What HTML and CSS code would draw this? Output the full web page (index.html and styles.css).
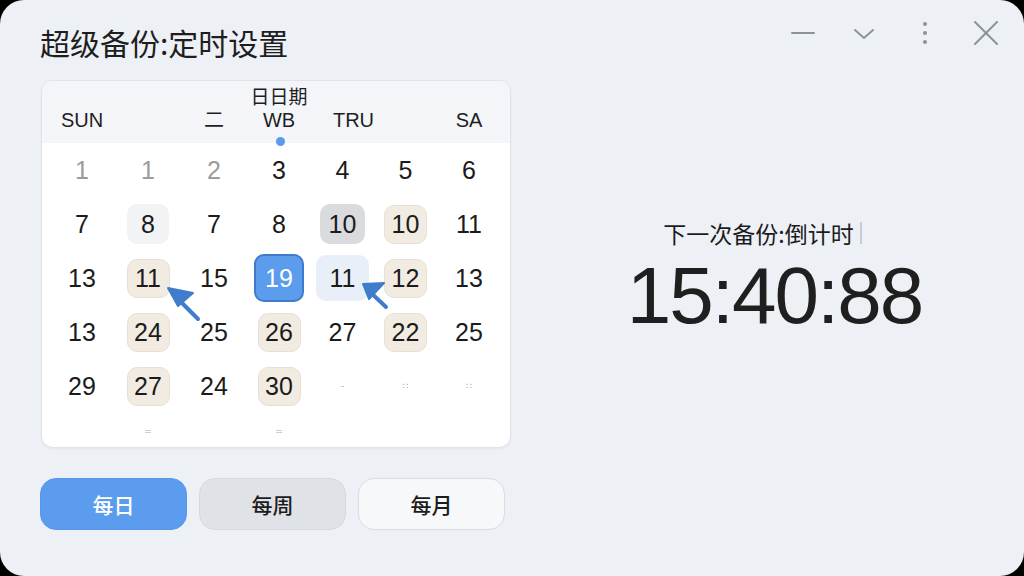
FILE: index.html
```html
<!DOCTYPE html>
<html lang="zh-CN">
<head>
<meta charset="utf-8">
<title>超级备份:定时设置</title>
<link rel="stylesheet" href="styles.css">
</head>
<body>
<div class="window">
  <section class="left">
    <h1 class="title">超级备份:定时设置</h1>
    <div class="card">
      <div class="card-head">
        <div class="hl">SUN</div>
        <div class="hl"></div>
        <div class="hl">二</div>
        <div class="hl stack"><span class="cjk">日日期</span><span>WB</span></div>
        <div class="hl shift">TRU</div>
        <div class="hl"></div>
        <div class="hl">SA</div>
      </div>
      <span class="today-dot"></span>
      <div class="days">
        <div class="d muted">1</div><div class="d muted">1</div><div class="d muted">2</div><div class="d">3</div><div class="d">4</div><div class="d">5</div><div class="d">6</div>

        <div class="d">7</div><div class="d"><span class="chip light">8</span></div><div class="d">7</div><div class="d">8</div><div class="d"><span class="chip gray">10</span></div><div class="d"><span class="chip beige">10</span></div><div class="d">11</div>

        <div class="d">13</div><div class="d"><span class="chip beige">11</span></div><div class="d">15</div><div class="d"><span class="chip blue">19</span></div><div class="d"><span class="chip pale">11</span></div><div class="d"><span class="chip beige">12</span></div><div class="d">13</div>

        <div class="d">13</div><div class="d"><span class="chip beige">24</span></div><div class="d">25</div><div class="d"><span class="chip beige">26</span></div><div class="d">27</div><div class="d"><span class="chip beige">22</span></div><div class="d">25</div>

        <div class="d">29</div><div class="d"><span class="chip beige">27</span></div><div class="d">24</div><div class="d"><span class="chip beige">30</span></div><div class="d tiny">-</div><div class="d tiny">∷</div><div class="d tiny">∷</div>

        <div class="d"></div><div class="d tiny">=</div><div class="d"></div><div class="d tiny">=</div><div class="d"></div><div class="d"></div><div class="d"></div>
      </div>
      <svg class="arrows" width="470" height="368" viewBox="0 0 470 368">
        <g fill="#3f7ccc" stroke="#3f7ccc" stroke-linecap="round" stroke-linejoin="round">
          <line x1="132" y1="214" x2="156" y2="238" stroke-width="4"/>
          <polygon points="126,207 151,212 136,225" stroke-width="2"/>
          <line x1="327" y1="210" x2="344" y2="226" stroke-width="4"/>
          <polygon points="321,203 342,202 327,218" stroke-width="2"/>
        </g>
      </svg>
    </div>
    <div class="tabs">
      <button class="tab on">每日</button>
      <button class="tab mid">每周</button>
      <button class="tab off">每月</button>
    </div>
  </section>
  <section class="right">
    <div class="controls">
      <svg class="ic" width="24" height="24" viewBox="0 0 24 24"><line x1="1" y1="12" x2="23" y2="12"/></svg>
      <svg class="ic" width="24" height="24" viewBox="0 0 24 24"><polyline points="3,9 12,17 21,9"/></svg>
      <svg class="ic dots" width="24" height="24" viewBox="0 0 24 24"><circle cx="12" cy="3" r="2"/><circle cx="12" cy="12" r="2"/><circle cx="12" cy="21" r="2"/></svg>
      <svg class="ic" width="24" height="24" viewBox="0 0 24 24"><line x1="1" y1="1" x2="23" y2="23"/><line x1="23" y1="1" x2="1" y2="23"/></svg>
    </div>
    <div class="countdown">
      <div class="cd-label">下一次备份:倒计时<span class="caret"></span></div>
      <div class="cd-time">15:40:88</div>
    </div>
  </section>
</div>
</body>
</html>
```

FILE: styles.css
```css
* { box-sizing: border-box; margin: 0; padding: 0; }

html, body {
  width: 1024px;
  height: 576px;
  overflow: hidden;
  background: #000;
}

body {
  font-family: "Liberation Sans", "Noto Sans CJK SC", sans-serif;
  color: #1d1d1f;
}

.window {
  width: 1024px;
  height: 576px;
  background: #edf1f6;
  border-radius: 24px;
  display: flex;
}

.left {
  width: 511px;
  padding: 24px 0 0 40px;
  display: flex;
  flex-direction: column;
}

.title {
  font-family: "Noto Sans CJK SC", sans-serif;
  font-size: 30px;
  line-height: 36px;
  font-weight: 400;
  color: #1e1e1e;
}

.card {
  position: relative;
  margin: 20px 0 0 1px;
  width: 470px;
  height: 368px;
  background: #fff;
  border: 1px solid #e0e4e9;
  border-radius: 12px;
  overflow: hidden;
  box-shadow: 0 1px 3px rgba(30, 40, 60, 0.05);
}

.card-head,
.days {
  display: grid;
  grid-template-columns: 66px 66px 66px 64px 63px 63px 64px;
  padding: 0 0 0 7px;
}

.card-head {
  height: 62px;
  background: #f3f5f8;
  align-items: end;
  padding-bottom: 11px;
}

.hl {
  font-size: 20px;
  line-height: 24px;
  text-align: center;
  color: #1e1e1e;
  display: flex;
  flex-direction: column;
  align-items: center;
}

.hl .cjk {
  font-family: "Noto Sans CJK SC", sans-serif;
  font-size: 19px;
}

.hl.shift { transform: translateX(11px); }

.today-dot {
  position: absolute;
  left: 234px;
  top: 56px;
  width: 9px;
  height: 9px;
  border-radius: 50%;
  background: #5b9bec;
}

.days {
  grid-template-rows: repeat(5, 54px) 35px;
}

.d {
  display: flex;
  align-items: center;
  justify-content: center;
  font-size: 25px;
  color: #1b1b1b;
}

.d.muted { color: #9c9c9c; }

.d.tiny {
  font-family: "DejaVu Sans", sans-serif;
  font-size: 9px;
  color: #a5a8ad;
}

.chip {
  width: 42px;
  height: 40px;
  border-radius: 10px;
  display: flex;
  align-items: center;
  justify-content: center;
}

.chip.light { background: #f2f3f5; }
.chip.gray { width: 45px; background: #d9dbde; }
.chip.beige {
  width: 43px;
  height: 39px;
  background: #f1ebe1;
  border: 1px solid #e9e0d3;
}
.chip.blue {
  width: 50px;
  height: 48px;
  background: #5c9cec;
  border: 2px solid #3d7bcd;
  color: #fff;
}
.chip.pale {
  width: 53px;
  height: 46px;
  background: #e8eff8;
}

.arrows {
  position: absolute;
  left: 0;
  top: 0;
  pointer-events: none;
}

.tabs {
  margin-top: 30px;
  display: flex;
  gap: 12px;
}

.tab {
  width: 147px;
  height: 52px;
  border-radius: 16px;
  border: 1px solid transparent;
  font-family: "Noto Sans CJK SC", sans-serif;
  font-size: 21px;
  font-weight: 500;
  color: #1c1c1c;
  display: flex;
  align-items: center;
  justify-content: center;
}

.tab.on { background: #5c9cee; color: #fff; border-color: #5896ea; }
.tab.mid { background: #dfe2e6; border-color: #d5d8dd; }
.tab.off { background: #f6f8fa; border-color: #d8dce1; }

.right {
  flex: 1;
  display: flex;
  flex-direction: column;
}

.controls {
  display: flex;
  justify-content: flex-end;
  gap: 37px;
  padding: 21px 26px 0 0;
}

.ic {
  stroke: #8d9298;
  stroke-width: 2;
  fill: none;
  stroke-linecap: round;
}

.ic.dots { fill: #8d9298; stroke: none; }

.countdown {
  flex: 1;
  display: flex;
  flex-direction: column;
  align-items: center;
  justify-content: center;
  padding-bottom: 66px;
  gap: 9px;
}

.cd-label {
  font-family: "Noto Sans CJK SC", sans-serif;
  font-size: 23px;
  line-height: 28px;
  color: #1c1c1c;
  display: flex;
  align-items: center;
  margin-right: 10px;
}

.caret {
  display: inline-block;
  width: 2px;
  height: 22px;
  margin-left: 6px;
  background: #c9ccd1;
}

.cd-time {
  font-size: 80px;
  line-height: 80px;
  letter-spacing: -2px;
  color: #1f1f1f;
  margin-left: 14px;
}
```
